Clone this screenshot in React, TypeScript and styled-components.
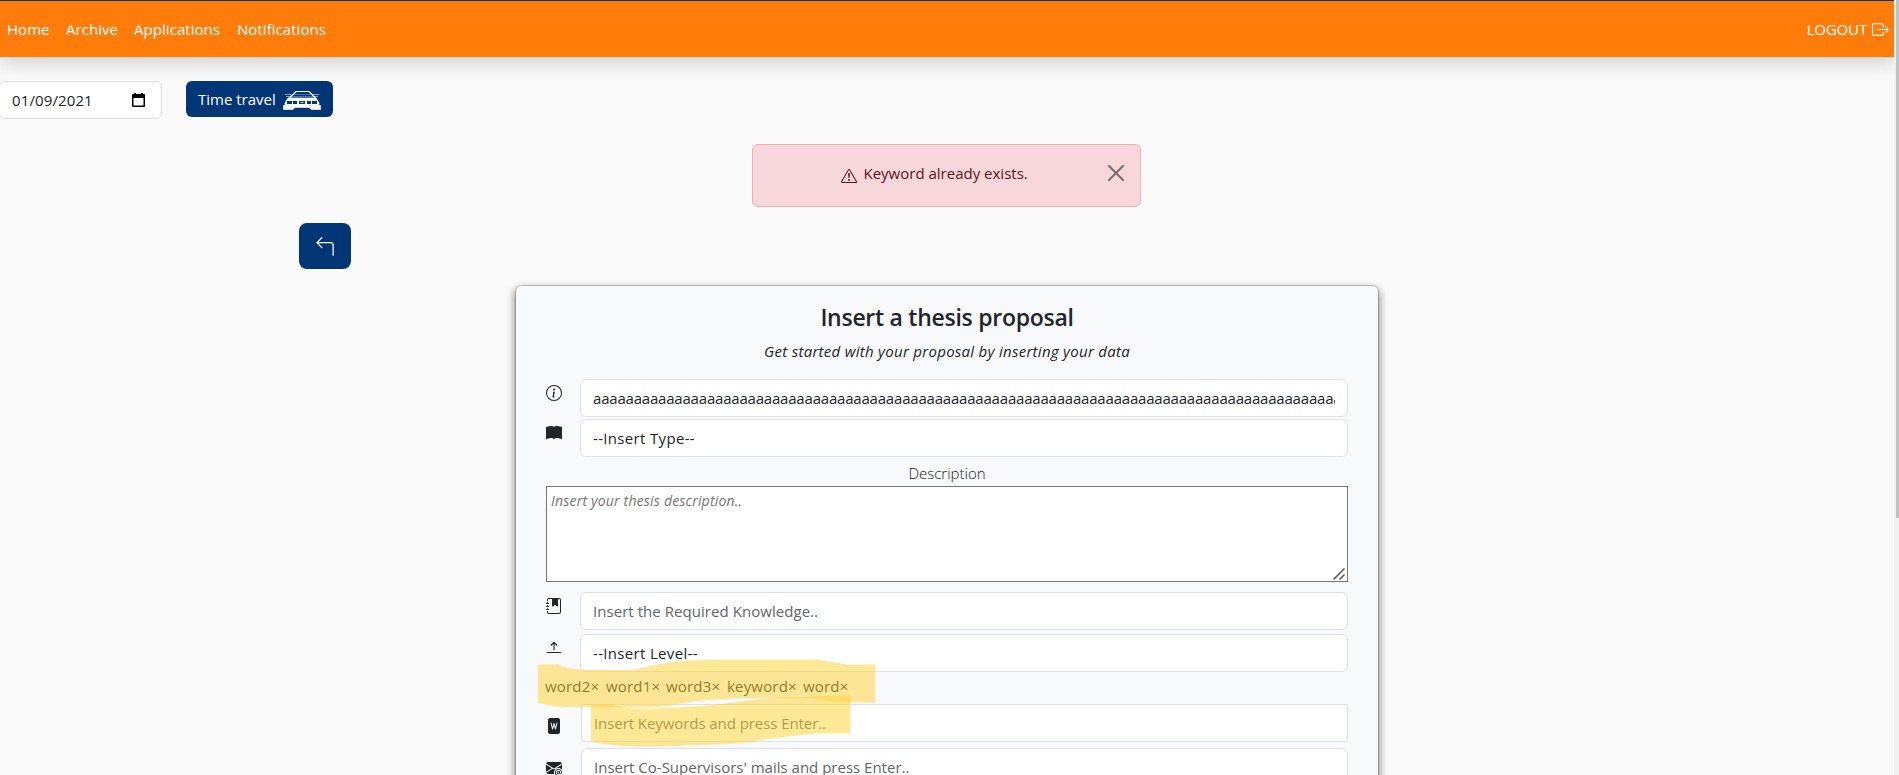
import React from "react";
import styled, { createGlobalStyle, css } from "styled-components";
import {
  BsArrow90DegLeft,
  BsBookFill,
  BsBoxArrowRight,
  BsEnvelopeAtFill,
  BsExclamationTriangle,
  BsFileWordFill,
  BsInfoCircle,
  BsJournalBookmarkFill,
} from "react-icons/bs";

const GlobalStyle = createGlobalStyle`
  *, *::before, *::after { box-sizing: border-box; }
  body {
    margin: 0;
    background: #fafafa;
    color: #212529;
    font-family: "Open Sans", "Noto Sans", sans-serif;
    font-size: 15px;
    line-height: 24px;
    overflow: hidden;
  }
`;

const Viewport = styled.div`
  display: flex;
  width: 100%;
  height: 775px;
  overflow: hidden;
`;

const Page = styled.div`
  flex: 1;
  min-width: 0;
  display: flex;
  flex-direction: column;
  overflow: hidden;
`;

const ScrollTrack = styled.div`
  flex: none;
  width: 5px;
  padding-left: 2px;
  background: #f1f1f1;
`;

const ScrollThumb = styled.div`
  height: 518px;
  background: #c1c1c1;
`;

const NavBar = styled.nav`
  flex: none;
  display: flex;
  align-items: center;
  height: 57px;
  padding: 0 5px 0 7px;
  border-top: 1px solid #003576;
  background: #ff7c0a;
  box-shadow: 0 8px 16px rgba(0, 0, 0, 0.15);
  color: #fff;
`;

const NavLink = styled.a<{ $width: number }>`
  width: ${(p) => p.$width}px;
  letter-spacing: 0.05px;
  white-space: nowrap;
`;

const Logout = styled.a`
  display: flex;
  align-items: center;
  gap: 5px;
  margin-left: auto;
  letter-spacing: -0.15px;
`;

const Toolbar = styled.div`
  flex: none;
  display: flex;
  align-items: flex-start;
  gap: 24px;
  height: 63px;
  margin-top: 24px;
`;

const fieldBox = css`
  height: 38px;
  border: 1px solid #dee2e6;
  border-radius: 6px;
  background: #fff;
`;

const DateField = styled.div`
  ${fieldBox}
  display: flex;
  align-items: center;
  justify-content: space-between;
  width: 163px;
  margin-left: -1px;
  padding: 0 16px 0 12px;
  letter-spacing: 0.12px;
`;

const TravelButton = styled.button`
  display: flex;
  align-items: center;
  gap: 7px;
  width: 147px;
  height: 36px;
  padding: 0 0 0 12px;
  border: 0;
  border-radius: 6px;
  background: #003576;
  color: #fff;
  font: inherit;
  white-space: nowrap;
  svg { margin-top: 2px; }
`;

const Alert = styled.div`
  flex: none;
  display: flex;
  justify-content: center;
  position: relative;
  width: 389px;
  height: 63px;
  margin-left: 752px;
  padding-top: 16px;
  border: 1px solid #f1aeb5;
  border-radius: 6px;
  background: #f8d7da;
  color: #58151c;
`;

const AlertMessage = styled.div`
  display: flex;
  gap: 7px;
  width: 212px;
  svg { margin-top: 7px; flex: none; }
`;

const CloseIcon = styled.svg`
  position: absolute;
  top: 20px;
  right: 16px;
`;

const BackButton = styled.button`
  flex: none;
  display: flex;
  align-items: center;
  justify-content: center;
  width: 52px;
  height: 46px;
  margin: 16px 0 0 299px;
  padding: 2px 1px 0 0;
  border: 0;
  border-radius: 8px;
  background: #003576;
  color: #fff;
`;

const Card = styled.main`
  flex: none;
  position: relative;
  display: flex;
  flex-direction: column;
  width: 864px;
  height: 900px;
  margin: 16px 0 0 515px;
  padding: 15px 30px;
  border: 1px solid rgba(0, 0, 0, 0.175);
  border-radius: 6px;
  background: #f8f9fb;
  background-clip: padding-box;
  box-shadow: 0 4px 8px rgba(0, 0, 0, 0.5);
`;

const Title = styled.h1`
  margin: 2px 0 0;
  font-size: 23px;
  font-weight: 600;
  line-height: 29px;
  letter-spacing: -0.27px;
  text-align: center;
`;

const Subtitle = styled.p`
  margin: 7px 0 0;
  font-style: italic;
  letter-spacing: 0.28px;
  text-align: center;
`;

const Row = styled.div<{ $gap: number; $icon?: number }>`
  display: flex;
  align-items: flex-start;
  justify-content: space-between;
  margin-top: ${(p) => p.$gap}px;
  > svg { margin-top: ${(p) => p.$icon ?? 6}px; }
`;

const Field = styled.input<{ $square?: boolean; $narrow?: boolean; $spacing?: number }>`
  ${fieldBox}
  width: ${(p) => (p.$narrow ? 767 : 768)}px;
  padding: 0 12px;
  outline: 0;
  border-radius: ${(p) => (p.$square ? 3 : 6)}px;
  color: #212529;
  font: inherit;
  letter-spacing: ${(p) => p.$spacing ?? 0}px;
  &::placeholder { color: #5f656b; opacity: 1; }
`;

const Select = styled.div`
  ${fieldBox}
  width: 768px;
  padding: 6px 12px;
  letter-spacing: 0.33px;
`;

const Label = styled.label`
  height: 29px;
  padding-top: 4px;
  font-weight: 300;
  text-align: center;
`;

const Description = styled.div`
  display: flex;
  justify-content: space-between;
  height: 96px;
  padding: 2px 2px 1px 4px;
  border: 1px solid #767676;
  background: #fff;
  color: #757575;
  font-size: 14px;
  font-style: italic;
  letter-spacing: 0.2px;
  svg { align-self: flex-end; }
`;

const Keywords = styled.div`
  display: flex;
  height: 32px;
  padding-top: 2px;
  margin-left: -1px;
`;

const Keyword = styled.span<{ $width: number }>`
  width: ${(p) => p.$width}px;
  letter-spacing: 0.18px;
  white-space: nowrap;
`;

const Highlight = styled.svg`
  position: absolute;
  left: 22px;
  top: 373px;
  pointer-events: none;
`;

const CalendarIcon = () => (
  <svg width="13" height="14" viewBox="0 0 13 14" fill="#000">
    <path fillRule="evenodd" d="M2 0h2v1h5V0h2v1h1a1 1 0 0 1 1 1v11a1 1 0 0 1-1 1H1a1 1 0 0 1-1-1V2a1 1 0 0 1 1-1h1zM1.5 5v7.5h10V5z" />
  </svg>
);

const CarIcon = () => (
  <svg width="38" height="21" viewBox="0 0 38 21" fill="none" stroke="#fff">
    <path d="M6 8.500 13 1.500h13l7 7" strokeWidth="1.2" />
    <path d="M11 4.500h17M9 6.500h21" strokeWidth=".6" opacity=".5" />
    <path d="M2 4.500h6v2H3M36 4.500h-6v2h5" strokeWidth=".8" opacity=".65" />
    <path d="M5 8h28l3 5v3H2v-3z" fill="#fff" strokeWidth=".6" />
    <path d="M4 11h5v3H4zM10 11h4v3h-4zM16 11h6v3h-6zM24 11h4v3h-4zM29 11h5v3h-5z" fill="#003576" stroke="none" />
    <path d="M17.500 12.500h3" strokeWidth=".8" />
    <path d="M.5 15.500h37v4h-9L26 17.500H12l-2 2H.5z" fill="#fff" strokeWidth=".6" />
  </svg>
);

const UploadIcon = () => (
  <svg width="16" height="16" viewBox="0 0 16 16" fill="none" stroke="#212529">
    <path d="M8 10V3M4.800 5.500 8 2.300 11.200 5.500" strokeWidth="1.1" />
    <path d="M1 12.500h14" />
  </svg>
);

const ResizeGrip = () => (
  <svg width="12" height="12" viewBox="0 0 12 12" fill="none" stroke="#555" strokeWidth="1.5">
    <path d="M.5 11.500 11.500.500M6.500 11.500l5-5" />
  </svg>
);

const App = () => (
  <Viewport>
    <GlobalStyle />
    <Page>
      <NavBar>
        <NavLink $width={59}>Home</NavLink>
        <NavLink $width={68}>Archive</NavLink>
        <NavLink $width={103}>Applications</NavLink>
        <NavLink $width={90}>Notifications</NavLink>
        <Logout>
          LOGOUT <BsBoxArrowRight size={17} />
        </Logout>
      </NavBar>
      <Toolbar>
        <DateField>
          <span>01/09/2021</span>
          <CalendarIcon />
        </DateField>
        <TravelButton>
          Time travel <CarIcon />
        </TravelButton>
      </Toolbar>
      <Alert>
        <AlertMessage>
          <BsExclamationTriangle size={16} />
          <span>Keyword already exists.</span>
        </AlertMessage>
        <CloseIcon width="16" height="16" viewBox="0 0 16 16" stroke="#7c6b6d" strokeWidth="2" strokeLinecap="round">
          <path d="m1 1 14 14M15 1 1 15" />
        </CloseIcon>
      </Alert>
      <BackButton>
        <BsArrow90DegLeft size={20} />
      </BackButton>
      <Card>
        <Title>Insert a thesis proposal</Title>
        <Subtitle>Get started with your proposal by inserting your data</Subtitle>
        <Row $gap={16}>
          <BsInfoCircle size={16} />
          <Field defaultValue={"a".repeat(100)} $spacing={-0.2} />
        </Row>
        <Row $gap={2} $icon={6}>
          <BsBookFill size={16} />
          <Select>--Insert Type--</Select>
        </Row>
        <Label>Description</Label>
        <Description>
          <span>Insert your thesis description..</span>
          <ResizeGrip />
        </Description>
        <Row $gap={10}>
          <BsJournalBookmarkFill size={16} />
          <Field placeholder="Insert the Required Knowledge.." $spacing={0.05} />
        </Row>
        <Row $gap={4}>
          <UploadIcon />
          <Select>--Insert Level--</Select>
        </Row>
        <Keywords>
          <Keyword $width={61}>word2×</Keyword>
          <Keyword $width={60}>word1×</Keyword>
          <Keyword $width={61}>word3×</Keyword>
          <Keyword $width={76}>keyword×</Keyword>
          <Keyword $width={50}>word×</Keyword>
        </Keywords>
        <Row $gap={0} $icon={14}>
          <BsFileWordFill size={16} />
          <Field $square $narrow placeholder="Insert Keywords and press Enter.." $spacing={-0.07} />
        </Row>
        <Row $gap={6} $icon={12}>
          <BsEnvelopeAtFill size={16} />
          <Field $narrow placeholder="Insert Co-Supervisors' mails and press Enter.." />
        </Row>
        <Highlight width="338" height="90" viewBox="538 659 338 90" fill="#ffd22d" fillOpacity=".5">
          <path d="M538 664.500H557C565 668 573 669.500 590 670H628C645 669 652 664 675 662C690 660 700 660 718 659.500H812C828 660 838 664 850 664.500H875V702.500H850C834 703 824 698.500 806 698H745C713 699 690 701 674 705C662 708 630 707 606 707H564C552 706 545 705 538 702.500Z" />
          <path d="M591 704.500H612C622 708 632 709 648 708.500C678 708 700 706 722 704C744 702 755 698.500 787 697.500C807 697 818 696 850.500 695.500V733.500H818C800 735 780 737 763 740C738 745 705 744 677 746C640 747 610 747 591 741Z" />
        </Highlight>
      </Card>
    </Page>
    <ScrollTrack>
      <ScrollThumb />
    </ScrollTrack>
  </Viewport>
);

export default App;
